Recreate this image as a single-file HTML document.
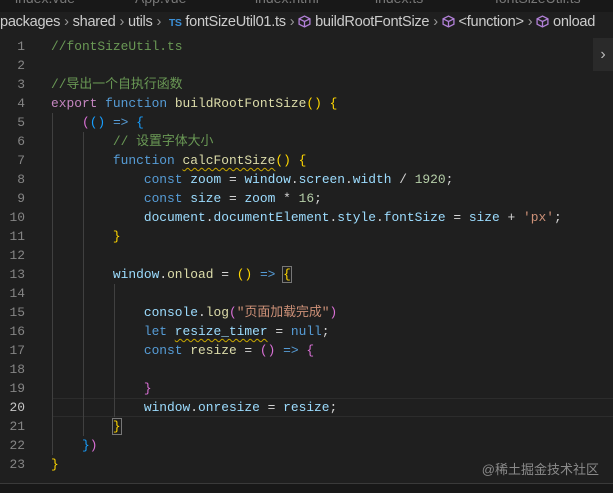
<!DOCTYPE html><html><head><meta charset="utf-8"><style>
body{margin:0;width:613px;height:492px;background:#1f1f1f;overflow:hidden;position:relative;font-family:"Liberation Mono","Noto Sans CJK SC",monospace}
.tabs{position:absolute;top:0;left:0;width:613px;height:12px;background:#181818;font:14px "Liberation Sans",sans-serif;color:#777;overflow:hidden}
.tabs span{position:absolute;top:-10px}
.bc{position:absolute;top:14px;left:0;height:26px;line-height:26px;font:14.6px "Liberation Sans","Noto Sans CJK SC",sans-serif;color:#cccccc;white-space:nowrap;letter-spacing:-0.3px}
.bc .s{color:#999;margin:0 4px}
.ts{color:#3c8fd6;font-size:10.5px;font-weight:bold}
.cube{display:inline-block;width:13px;height:13px;vertical-align:-2px}
.ln{position:absolute;left:0;width:25px;text-align:right;color:#858585;font-size:12.9px;line-height:19px}
.code{position:absolute;left:51px;font-size:12.9px;line-height:19px;white-space:pre;color:#d4d4d4}
.c{color:#6a9955}.k{color:#569cd6}.f{color:#dcdcaa}.v{color:#9cdcfe}.n{color:#b5cea8}.s2{color:#ce9178}.y{color:#ffd700}.p{color:#da70d6}.b{color:#179fff}
.g{position:absolute;width:1px;background:#404040}
.wav{text-decoration:underline wavy #c8a800;text-decoration-thickness:1px;text-underline-offset:3px}
</style></head><body>
<div class="tabs"><span style="left:15px">index.vue</span><span style="left:135px">App.vue</span><span style="left:255px">index.html</span><span style="left:375px">index.ts</span><span style="left:495px">fontSizeUtil.ts</span></div>
<div class="bc">packages<span class="s">›</span>shared<span class="s">›</span>utils<span class="s">›</span> <span class="ts">TS</span> fontSizeUtil01.ts<span class="s">›</span><svg class="cube" viewBox="0 0 12 12"><path d="M6 1L11 3.5V8.5L6 11L1 8.5V3.5Z M1 3.5L6 6L11 3.5 M6 6V11" fill="none" stroke="#b180d7" stroke-width="1.2"/></svg> buildRootFontSize<span class="s">›</span><svg class="cube" viewBox="0 0 12 12"><path d="M6 1L11 3.5V8.5L6 11L1 8.5V3.5Z M1 3.5L6 6L11 3.5 M6 6V11" fill="none" stroke="#b180d7" stroke-width="1.2"/></svg> &lt;function&gt;<span class="s">›</span><svg class="cube" viewBox="0 0 12 12"><path d="M6 1L11 3.5V8.5L6 11L1 8.5V3.5Z M1 3.5L6 6L11 3.5 M6 6V11" fill="none" stroke="#b180d7" stroke-width="1.2"/></svg> onload</div>
<div style="position:absolute;left:593px;top:38px;width:20px;height:33px;background:#2a2a2a;color:#bbb;font:16px 'Liberation Sans';line-height:33px;text-align:center">›</div>
<div style="position:absolute;left:52px;top:398px;width:560px;height:17px;border:1px solid #2c2c2c"></div>
<div class="g" style="left:52px;top:113px;height:342px"></div>
<div class="g" style="left:83px;top:132px;height:304px"></div>
<div class="g" style="left:114px;top:284px;height:133px"></div>
<div class="ln" style="top:37px">1<br>2<br>3<br>4<br>5<br>6<br>7<br>8<br>9<br>10<br>11<br>12<br>13<br>14<br>15<br>16<br>17<br>18<br>19<br><span style="color:#c6c6c6">20</span><br>21<br>22<br>23</div>
<div class="code" style="top:37px"><span class="c">//fontSizeUtil.ts</span>

<span class="c">//导出一个自执行函数</span>
<span class="p" style="color:#c586c0">export</span> <span class="k">function</span> <span class="f">buildRootFontSize</span><span class="y">()</span> <span class="y">{</span>
    <span class="p">(</span><span class="b">()</span> <span class="k">=&gt;</span> <span class="b">{</span>
        <span class="c">// 设置字体大小</span>
        <span class="k">function</span> <span class="f wav">calcFontSize</span><span class="y">()</span> <span class="y">{</span>
            <span class="k">const</span> <span class="v">zoom</span> = <span class="v">window</span>.<span class="v">screen</span>.<span class="v">width</span> / <span class="n">1920</span>;
            <span class="k">const</span> <span class="v">size</span> = <span class="v">zoom</span> * <span class="n">16</span>;
            <span class="v">document</span>.<span class="v">documentElement</span>.<span class="v">style</span>.<span class="v">fontSize</span> = <span class="v">size</span> + <span class="s2">'px'</span>;
        <span class="y">}</span>

        <span class="v">window</span>.<span class="f">onload</span> = <span class="y">()</span> <span class="k">=&gt;</span> <span class="y" style="outline:1px solid #777">{</span>

            <span class="v">console</span>.<span class="f">log</span><span class="p">(</span><span class="s2">"页面加载完成"</span><span class="p">)</span>
            <span class="k">let</span> <span class="v wav">resize_timer</span> = <span class="k">null</span>;
            <span class="k">const</span> <span class="f">resize</span> = <span class="p">()</span> <span class="k">=&gt;</span> <span class="p">{</span>

            <span class="p">}</span>
            <span class="v">window</span>.<span class="v">onresize</span> = <span class="v">resize</span>;
        <span class="y" style="outline:1px solid #777">}</span>
    <span class="b">}</span><span class="p">)</span>
<span class="y">}</span></div>
<div style="position:absolute;right:14px;top:459px;font:13px 'Liberation Sans','Noto Sans CJK SC',sans-serif;color:#8a8a8a">@稀土掘金技术社区</div>
<div style="position:absolute;left:0;top:483px;width:613px;height:9px;background:#181818;border-top:1px solid #3a3a3a"></div>
</body></html>
